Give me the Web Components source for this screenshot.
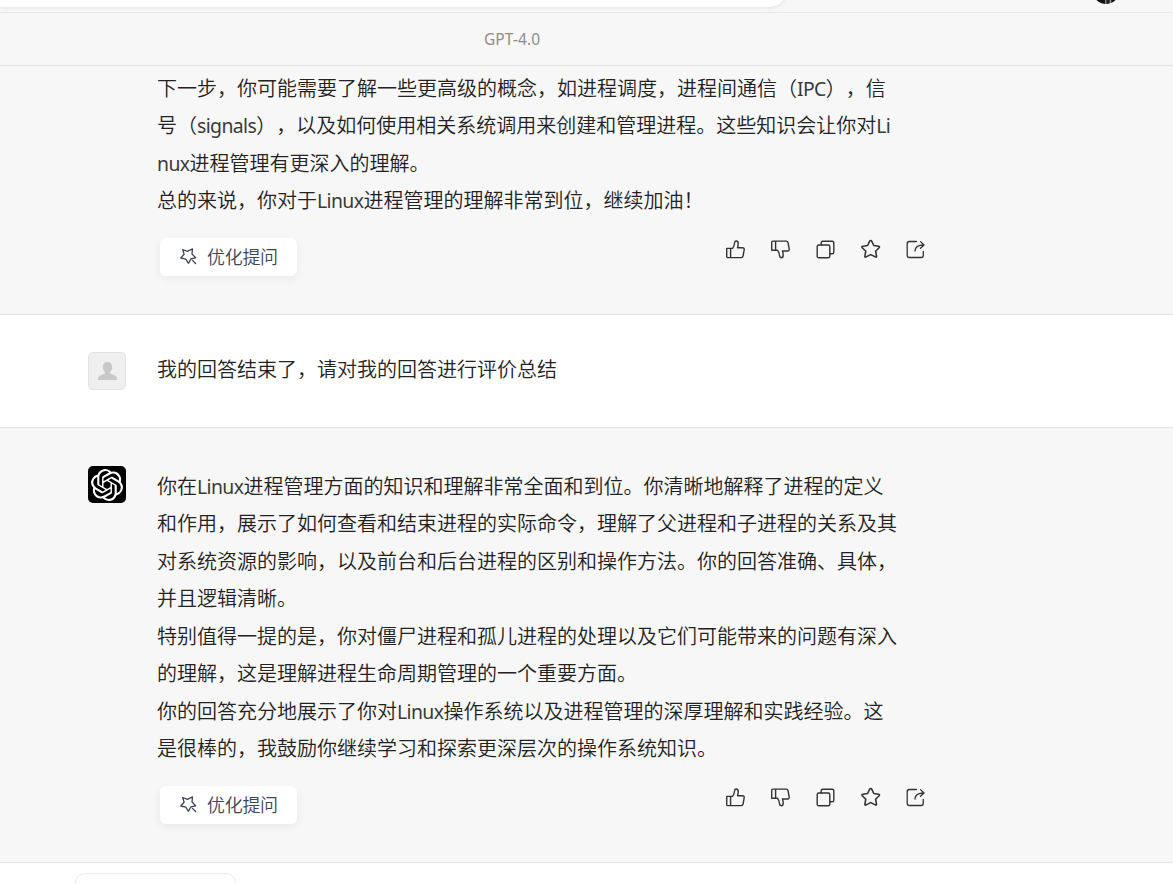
<!DOCTYPE html>
<html lang="zh-CN">
<head>
  <meta charset="UTF-8">
  <meta name="viewport" content="width=device-width, initial-scale=1.0">
  <title>GPT-4.0</title>
  <style>
    body {
      --gray: #f7f7f7;
      --line: #e3e3e3;
      --text: #222;
      margin: 0;
      height: 884px;
      overflow: hidden;
      background: white;
      color: var(--text);
      font-family: 'Noto Sans CJK SC', sans-serif;
      font-weight: 350;
      text-spacing-trim: space-all;
    }
    en-text {
      font-family: 'Noto Sans', sans-serif;
      font-size: .97em;
      font-weight: 400;
      letter-spacing: -.6px;
      color: #3a3a3a;
    }
  </style>
</head>
<body>
  <chat-app>
    <top-strip slot="top"></top-strip>
    <model-bar slot="top">GPT-4.0</model-bar>

    <chat-message class="first" kind="bot">
      <text-line>下一步，你可能需要了解一些更高级的概念，如进程调度，进程间通信（<en-text>IPC</en-text>），信</text-line>
      <text-line>号（<en-text>signals</en-text>），以及如何使用相关系统调用来创建和管理进程。这些知识会让你对<en-text>Li</en-text></text-line>
      <text-line><en-text>nux</en-text>进程管理有更深入的理解。</text-line>
      <text-line>总的来说，你对于<en-text>Linux</en-text>进程管理的理解非常到位，继续加油！</text-line>
      <message-actions slot="actions">优化提问</message-actions>
    </chat-message>

    <chat-message kind="user">
      <chat-avatar slot="avatar" kind="user"></chat-avatar>
      <text-line>我的回答结束了，请对我的回答进行评价总结</text-line>
    </chat-message>

    <chat-message kind="bot">
      <chat-avatar slot="avatar" kind="bot"></chat-avatar>
      <text-line>你在<en-text>Linux</en-text>进程管理方面的知识和理解非常全面和到位。你清晰地解释了进程的定义</text-line>
      <text-line>和作用，展示了如何查看和结束进程的实际命令，理解了父进程和子进程的关系及其</text-line>
      <text-line>对系统资源的影响，以及前台和后台进程的区别和操作方法。你的回答准确、具体，</text-line>
      <text-line>并且逻辑清晰。</text-line>
      <text-line>特别值得一提的是，你对僵尸进程和孤儿进程的处理以及它们可能带来的问题有深入</text-line>
      <text-line>的理解，这是理解进程生命周期管理的一个重要方面。</text-line>
      <text-line>你的回答充分地展示了你对<en-text>Linux</en-text>操作系统以及进程管理的深厚理解和实践经验。这</text-line>
      <text-line>是很棒的，我鼓励你继续学习和探索更深层次的操作系统知识。</text-line>
      <message-actions slot="actions">优化提问</message-actions>
    </chat-message>

    <chat-footer slot="footer"></chat-footer>
  </chat-app>

  <script>
    const icons = {
      like: `<path d="M.7 8.4h3.900v9.200H1.900q-1.200 0-1.200-1.200zM4.600 8.400h1.900q1.700-1.800 2.100-5.600.1-1.800 1.700-1.800 1.900 0 1.900 2.500 0 2-.7 4.200h5q1.900 0 1.700 1.900l-1.100 6.300q-.3 1.700-1.900 1.700H4.600"/>`,
      dislike: `<path d="M.7 10.300h3.900V1.100H1.900Q.7 1.100.7 2.300zM4.600 10.300h1.900q1.700 1.800 2.100 5.600.1 1.800 1.700 1.800 1.900 0 1.900-2.500 0-2-.7-4.200h5q1.900 0 1.700-1.900l-1.100-6.300q-.3-1.700-1.900-1.700H4.600"/>`,
      copy: `<rect x="1.2" y="5" width="12.6" height="12.8" rx="1.6"/><path d="M5.2 5V2.8q0-1.6 1.6-1.6h9.4q1.6 0 1.6 1.6v9.4q0 1.6-1.6 1.6h-2.4"/>`,
      star: `<path stroke-width="1.6" d="M9.700.5q.7 0 1 .7l2.100 4.300 4.800.7q1.600.3.500 1.500l-3.500 3.500.9 4.900q.2 1.500-1.200.8L9.700 14.600l-4.600 2.300q-1.400.7-1.200-.8l.9-4.900L1.300 7.700Q.2 6.500 1.800 6.200l4.800-.7L8.700 1.200q.3-.7 1-.7z"/>`,
      share: `<path stroke-width="1.3" d="M10.400 1.500H3.400q-2.200 0-2.200 2.200v11.600q0 2.200 2.200 2.200h11.700q2.200 0 2.200-2.200v-4M9 11q.2-6 8.700-6M14.500 1.600 18 5l-3.500 3.300"/>`,
      magic: `<path stroke-width="1.3" d="M2.700 1.500 7.300 3.300 12.500 .9 12 6l3.700 3.800-4.800 1.100-2.400 4.400-2.700-4.200L.8 10 4.100 6.200zM12.500 12.400l3.100 3.100"/>`,
      logo: `<path d="M22.2819 9.8211a5.9847 5.9847 0 0 0-.5157-4.9108 6.0462 6.0462 0 0 0-6.5098-2.9A6.0651 6.0651 0 0 0 4.9807 4.1818a5.9847 5.9847 0 0 0-3.9977 2.9 6.0462 6.0462 0 0 0 .7427 7.0966 5.98 5.98 0 0 0 .511 4.9107 6.051 6.051 0 0 0 6.5146 2.9001A5.9847 5.9847 0 0 0 13.2599 24a6.0557 6.0557 0 0 0 5.7718-4.2058 5.9894 5.9894 0 0 0 3.9977-2.9001 6.0557 6.0557 0 0 0-.7475-7.0729zm-9.022 12.6081a4.4755 4.4755 0 0 1-2.8764-1.0408l.1419-.0804 4.7783-2.7582a.7948.7948 0 0 0 .3927-.6813v-6.7369l2.02 1.1686a.071.071 0 0 1 .038.052v5.5826a4.504 4.504 0 0 1-4.4945 4.4944zm-9.6607-4.1254a4.4708 4.4708 0 0 1-.5346-3.0137l.142.0852 4.783 2.7582a.7712.7712 0 0 0 .7806 0l5.8428-3.3685v2.3324a.0804.0804 0 0 1-.0332.0615L9.74 19.9502a4.4992 4.4992 0 0 1-6.1408-1.6464zM2.3408 7.8956a4.485 4.485 0 0 1 2.3655-1.9728V11.6a.7664.7664 0 0 0 .3879.6765l5.8144 3.3543-2.0201 1.1685a.0757.0757 0 0 1-.071 0l-4.8303-2.7865A4.504 4.504 0 0 1 2.3408 7.872zm16.5963 3.8558L13.1038 8.364 15.1192 7.2a.0757.0757 0 0 1 .071 0l4.8303 2.7913a4.4944 4.4944 0 0 1-.6765 8.1042v-5.6772a.79.79 0 0 0-.407-.667zm2.0107-3.0231l-.142-.0852-4.7735-2.7818a.7759.7759 0 0 0-.7854 0L9.409 9.2297V6.8974a.0662.0662 0 0 1 .0284-.0615l4.8303-2.7866a4.4992 4.4992 0 0 1 6.6802 4.66zM8.3065 12.863l-2.02-1.1638a.0804.0804 0 0 1-.038-.0567V6.0742a4.4992 4.4992 0 0 1 7.3757-3.4537l-.142.0805L8.704 5.459a.7948.7948 0 0 0-.3927.6813zm1.0976-2.3654l2.602-1.4998 2.6069 1.4998v2.9994l-2.5974 1.4997-2.6067-1.4997Z"/>`,
      person: `<path d="M9 0c3 0 4.700 2.100 4.700 5 0 2-.8 3.900-2.100 5v1.500l5.200 2.300q1.700.9 1.700 2.700V18H-.5v-1.500q0-1.800 1.700-2.700L6.400 11.500V10C5.100 8.900 4.300 7 4.300 5 4.300 2.100 6 0 9 0z"/>`
    };

    function define(name, html) {
      customElements.define(name, class extends HTMLElement {
        constructor() {
          super();
          this.attachShadow({ mode: 'open' });
          this.shadowRoot.innerHTML = typeof html === 'function' ? html(this) : html;
        }
      });
    }

    define('en-text', `<style>:host { display: inline; }</style><slot></slot>`);

    define('text-line', `
      <style>
        :host {
          display: block;
          height: 37.5px;
          line-height: 37.5px;
          font-size: 20px;
          white-space: nowrap;
        }
      </style>
      <slot></slot>
    `);

    define('chat-app', `
      <style>
        :host {
          display: flex;
          flex-direction: column;
          height: 100%;
        }
      </style>
      <slot name="top"></slot>
      <slot></slot>
      <slot name="footer"></slot>
    `);

    define('top-strip', `
      <style>
        :host {
          display: flex;
          justify-content: space-between;
          box-sizing: border-box;
          height: 13px;
          flex: none;
          background: var(--gray);
          border-bottom: 1px solid #e8e8e8;
          overflow: hidden;
        }
        .search {
          width: 788px;
          height: 38px;
          margin-top: -31px;
          background: white;
          border-radius: 0 0 19px 0;
          box-shadow: 0 1px 4px rgba(0, 0, 0, .08);
        }
        .photo {
          width: 26px;
          height: 26px;
          margin: -22px 54px 0 0;
          border-radius: 50%;
          background: linear-gradient(90deg, #111 46%, #999 47%, #222 54%, #222 62%, #aaa 68%, #111 72%);
        }
      </style>
      <div class="search"></div>
      <div class="photo"></div>
    `);

    define('model-bar', `
      <style>
        :host {
          display: flex;
          flex: none;
          align-items: center;
          justify-content: center;
          box-sizing: border-box;
          height: 53px;
          padding-right: 149px;
          background: var(--gray);
          border-bottom: 1px solid var(--line);
          color: #8c8c8c;
          font: 400 15.5px 'Noto Sans', sans-serif;
          letter-spacing: .1px;
        }
      </style>
      <slot></slot>
    `);

    define('chat-message', `
      <style>
        :host {
          display: grid;
          flex: none;
          grid-template-columns: 69px 768px;
          align-content: start;
          box-sizing: border-box;
          padding: 38px 0 0 88px;
          border-bottom: 1px solid var(--line);
        }
        :host([kind=bot]) {
          height: 435px;
          background: var(--gray);
        }
        :host([kind=user]) {
          height: 113px;
          padding-top: 37px;
        }
        :host(.first) {
          height: 249px;
          padding-top: 2px;
        }
        .text {
          padding-top: .5px;
        }
        :host([kind=user]) .text {
          margin-top: -2.5px;
        }
      </style>
      <div><slot name="avatar"></slot></div>
      <div class="text">
        <slot></slot>
        <slot name="actions"></slot>
      </div>
    `);

    define('chat-avatar', (el) => {
      const user = el.getAttribute('kind') === 'user';
      return `
        <style>
          :host {
            display: flex;
            align-items: center;
            justify-content: center;
            box-sizing: border-box;
            width: 38px;
            height: ${user ? 38 : 37}px;
            border-radius: 5px;
            ${user ? 'background: #efefef; border: 1px solid #e2e2e2;' : 'background: black;'}
          }
          svg {
            fill: ${user ? '#c8c8c8' : 'white'};
          }
        </style>
        ${user
          ? `<svg width="19" height="18" viewBox="-.5 0 19 18">${icons.person}</svg>`
          : `<svg width="32" height="32" viewBox="0 0 24 24">${icons.logo}</svg>`}
      `;
    });

    const tool = (name) => `<svg width="19" height="19" viewBox="0 0 19 19">${icons[name]}</svg>`;

    define('message-actions', `
      <style>
        :host {
          display: flex;
          align-items: flex-start;
          justify-content: space-between;
          padding: 19.5px 0 0 3px;
        }
        svg {
          display: block;
          overflow: visible;
          fill: none;
          stroke: #333;
          stroke-width: 1.4;
          stroke-linejoin: round;
          stroke-linecap: round;
        }
        button {
          display: flex;
          align-items: center;
          gap: 10px;
          width: 137px;
          height: 38px;
          padding: 0 0 2px 20px;
          border: none;
          border-radius: 6px;
          background: white;
          box-shadow: 0 3px 10px rgba(0, 0, 0, .06);
          color: #3e4455;
          font: inherit;
          font-size: 18px;
          letter-spacing: -.3px;
          white-space: nowrap;
        }
        button svg {
          stroke: #3e4455;
          flex: none;
        }
        .tools {
          display: flex;
          gap: 26px;
          padding-top: 2px;
        }
      </style>
      <button><svg width="17" height="17" viewBox="0 0 17 17">${icons.magic}</svg><slot></slot></button>
      <div class="tools">${['like', 'dislike', 'copy', 'star', 'share'].map(tool).join('')}</div>
    `);

    define('chat-footer', `
      <style>
        :host {
          display: block;
          padding: 10px 0 0 75px;
        }
        .box {
          box-sizing: border-box;
          width: 161px;
          height: 40px;
          border: 1px solid #ececec;
          border-radius: 10px;
        }
      </style>
      <div class="box"></div>
    `);
  </script>
</body>
</html>
